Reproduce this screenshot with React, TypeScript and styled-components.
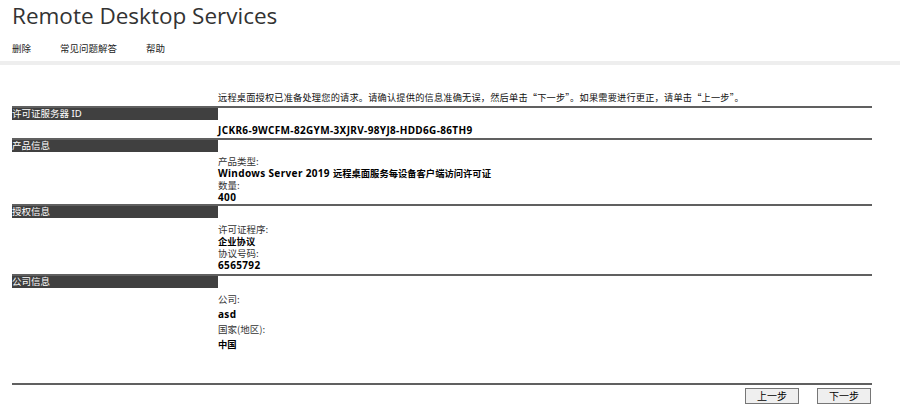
import React from 'react';
import styled, { createGlobalStyle } from 'styled-components';

const GlobalStyle = createGlobalStyle`
  body {
    margin: 0;
    background: #ffffff;
    font-family: "Noto Sans", "Noto Sans CJK SC", sans-serif;
    color: #000;
  }
`;

// Types
interface Field {
  label: string;
  value: string;
}

interface Section {
  title: string;
  fields: Field[];
  height: number;
  row: number;
  top: number;
}

// Styled Components
const Page = styled.div`
  width: 900px;
  height: 420px;
  overflow: hidden;
`;

const Title = styled.h1`
  margin: 0;
  padding: 1px 0 0 12px;
  font-family: "Open Sans", "Noto Sans", sans-serif;
  font-weight: 400;
  font-size: 22.5px;
  line-height: 30px;
  color: #333;
`;

const Nav = styled.div`
  display: flex;
  gap: 29px;
  padding: 11px 0 0 12px;
  height: 19px;
  font-family: "Noto Sans CJK SC", sans-serif;
  font-size: 9.5px;
  line-height: 12px;
  color: #222;
`;

const Band = styled.div`
  height: 4px;
  background: #eeeeee;
`;

const Body = styled.div`
  margin: 0 28px 0 12px;
  padding-top: 26px;
`;

const Intro = styled.div`
  padding-left: 206px;
  font-family: "Noto Sans CJK SC", sans-serif;
  font-size: 9.2px;
  letter-spacing: 0.2px;
  line-height: 12px;
  height: 15px;
  color: #111;
  white-space: nowrap;
`;

const Block = styled.div`
  border-top: 2px solid #606060;
`;

const HeaderBar = styled.div`
  width: 206px;
  height: 12px;
  background: #404040;
  color: #fff;
  font-family: "Noto Sans", "Noto Sans CJK SC", sans-serif;
  font-size: 9.5px;
  font-weight: 400;
  line-height: 12px;
  white-space: nowrap;
`;

const Content = styled.div<{ $top: number }>`
  box-sizing: border-box;
  padding: ${(p) => p.$top}px 0 0 206px;
  font-size: 9.5px;
  color: #111;
`;

const Line = styled.div<{ $h: number }>`
  height: ${(p) => p.$h}px;
  line-height: ${(p) => p.$h}px;
  white-space: nowrap;
`;

const Label = styled(Line)`
  font-family: "Noto Sans CJK SC", sans-serif;
  color: #333;
`;

const Value = styled(Line)`
  font-family: "Noto Sans", "Noto Sans CJK SC", sans-serif;
  font-weight: 700;
  font-size: 10px;
  letter-spacing: 0.35px;
  color: #000;
`;

const Cjk = styled.span`
  font-family: "Noto Sans CJK SC", sans-serif;
  font-size: 9.3px;
  letter-spacing: 0;
`;

const Footer = styled.div`
  margin: 0 28px 0 12px;
  border-top: 2px solid #606060;
  display: flex;
  justify-content: flex-end;
  gap: 18px;
  padding-top: 3px;
`;

const StepButton = styled.button`
  width: 54px;
  height: 16px;
  margin: 0;
  padding: 0;
  border: 1px solid #767676;
  background: #efefef;
  font-family: "Noto Sans CJK SC", sans-serif;
  font-size: 10px;
  line-height: 14px;
  color: #000;
  &:last-child {
    margin-right: 1px;
  }
`;

const sections: Section[] = [
  {
    title: '许可证服务器 ID',
    height: 18,
    row: 12.5,
    top: 4,
    fields: [{ label: '', value: 'JCKR6-9WCFM-82GYM-3XJRV-98YJ8-HDD6G-86TH9' }],
  },
  {
    title: '产品信息',
    height: 52,
    row: 12.3,
    top: 2.5,
    fields: [
      { label: '产品类型:', value: 'Windows Server 2019 远程桌面服务每设备客户端访问许可证' },
      { label: '数量:', value: '400' },
    ],
  },
  {
    title: '授权信息',
    height: 56,
    row: 12.3,
    top: 4.5,
    fields: [
      { label: '许可证程序:', value: '企业协议' },
      { label: '协议号码:', value: '6565792' },
    ],
  },
  {
    title: '公司信息',
    height: 95,
    row: 15,
    top: 3.5,
    fields: [
      { label: '公司:', value: 'asd' },
      { label: '国家(地区):', value: '中国' },
    ],
  },
];

// split a value so that Chinese runs get the CJK face and size
const renderValue = (text: string) =>
  text
    .split(/([\u4e00-\u9fff]+)/)
    .filter(Boolean)
    .map((part, i) =>
      /[\u4e00-\u9fff]/.test(part) ? <Cjk key={i}>{part}</Cjk> : <span key={i}>{part}</span>
    );

const App: React.FC = () => {
  return (
    <Page>
      <GlobalStyle />
      <Title>Remote Desktop Services</Title>
      <Nav>
        <span>删除</span>
        <span>常见问题解答</span>
        <span>帮助</span>
      </Nav>
      <Band />
      <Body>
        <Intro>
          远程桌面授权已准备处理您的请求。请确认提供的信息准确无误，然后单击“下一步”。如果需要进行更正，请单击“上一步”。
        </Intro>
        {sections.map((s) => (
          <Block key={s.title}>
            <HeaderBar>{s.title}</HeaderBar>
            <Content $top={s.top} style={{ height: s.height }}>
              {s.fields.map((f, i) => (
                <React.Fragment key={i}>
                  {f.label && <Label $h={s.row}>{f.label}</Label>}
                  <Value $h={s.row}>{renderValue(f.value)}</Value>
                </React.Fragment>
              ))}
            </Content>
          </Block>
        ))}
      </Body>
      <Footer>
        <StepButton>上一步</StepButton>
        <StepButton>下一步</StepButton>
      </Footer>
    </Page>
  );
};

export default App;
